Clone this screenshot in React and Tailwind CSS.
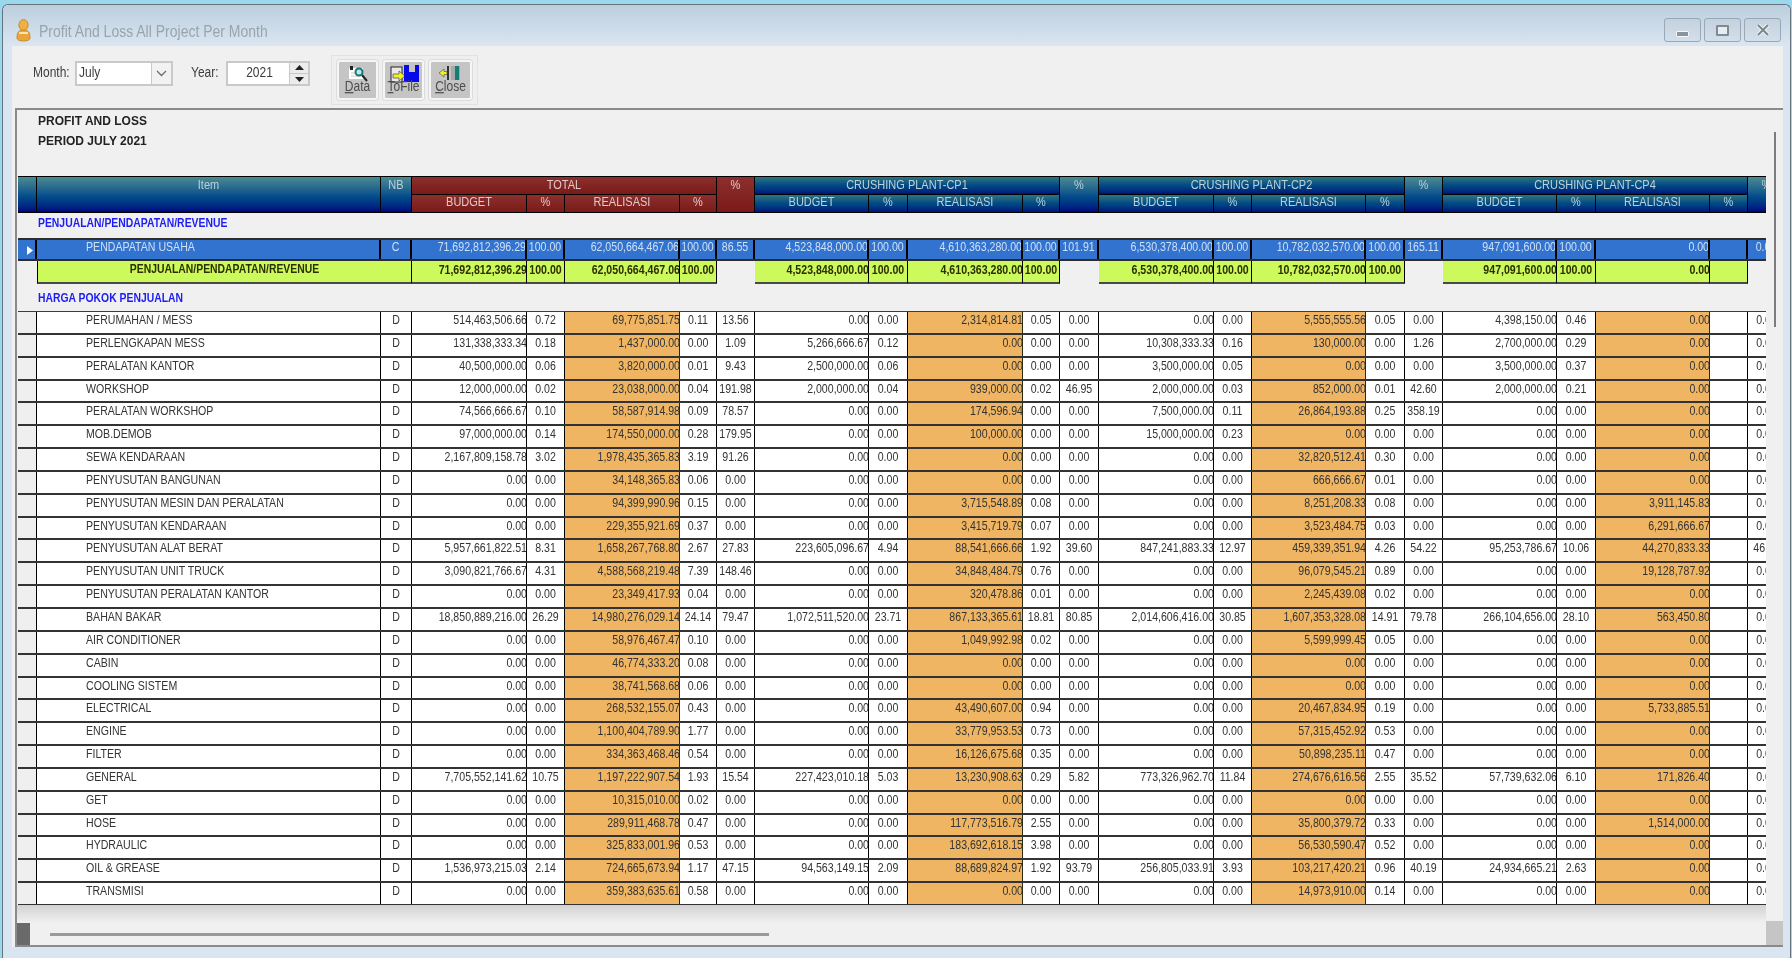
import React from 'react';

const COLS = 'grid grid-cols-[19px_344px_31px_115px_38px_115px_37px_38px_114px_39px_115px_37px_39px_115px_38px_114px_39px_38px_114px_39px_114px_38px_38px]';

const Z = ['0.00', '0.00', '0.00', '0.00', '0.00'];
const r = (real, pct) => ['0.00', '0.00', real, pct, '0.00'];
const c4 = (budget, pct, real, last = '0.00') => [budget, pct, real, '', last];
const C4Z = c4('0.00', '0.00', '0.00');

const ROWS = [
  ['PERUMAHAN / MESS', ['514,463,506.66', '0.72', '69,775,851.75', '0.11', '13.56'], r('2,314,814.81', '0.05'), r('5,555,555.56', '0.05'), c4('4,398,150.00', '0.46', '0.00')],
  ['PERLENGKAPAN MESS', ['131,338,333.34', '0.18', '1,437,000.00', '0.00', '1.09'], ['5,266,666.67', '0.12', '0.00', '0.00', '0.00'], ['10,308,333.33', '0.16', '130,000.00', '0.00', '1.26'], c4('2,700,000.00', '0.29', '0.00')],
  ['PERALATAN KANTOR', ['40,500,000.00', '0.06', '3,820,000.00', '0.01', '9.43'], ['2,500,000.00', '0.06', '0.00', '0.00', '0.00'], ['3,500,000.00', '0.05', '0.00', '0.00', '0.00'], c4('3,500,000.00', '0.37', '0.00')],
  ['WORKSHOP', ['12,000,000.00', '0.02', '23,038,000.00', '0.04', '191.98'], ['2,000,000.00', '0.04', '939,000.00', '0.02', '46.95'], ['2,000,000.00', '0.03', '852,000.00', '0.01', '42.60'], c4('2,000,000.00', '0.21', '0.00')],
  ['PERALATAN WORKSHOP', ['74,566,666.67', '0.10', '58,587,914.98', '0.09', '78.57'], r('174,596.94', '0.00'), ['7,500,000.00', '0.11', '26,864,193.88', '0.25', '358.19'], C4Z],
  ['MOB.DEMOB', ['97,000,000.00', '0.14', '174,550,000.00', '0.28', '179.95'], r('100,000.00', '0.00'), ['15,000,000.00', '0.23', '0.00', '0.00', '0.00'], C4Z],
  ['SEWA KENDARAAN', ['2,167,809,158.78', '3.02', '1,978,435,365.83', '3.19', '91.26'], Z, r('32,820,512.41', '0.30'), C4Z],
  ['PENYUSUTAN BANGUNAN', r('34,148,365.83', '0.06'), Z, r('666,666.67', '0.01'), C4Z],
  ['PENYUSUTAN MESIN DAN PERALATAN', r('94,399,990.96', '0.15'), r('3,715,548.89', '0.08'), r('8,251,208.33', '0.08'), c4('0.00', '0.00', '3,911,145.83')],
  ['PENYUSUTAN KENDARAAN', r('229,355,921.69', '0.37'), r('3,415,719.79', '0.07'), r('3,523,484.75', '0.03'), c4('0.00', '0.00', '6,291,666.67')],
  ['PENYUSUTAN ALAT BERAT', ['5,957,661,822.51', '8.31', '1,658,267,768.80', '2.67', '27.83'], ['223,605,096.67', '4.94', '88,541,666.66', '1.92', '39.60'], ['847,241,883.33', '12.97', '459,339,351.94', '4.26', '54.22'], c4('95,253,786.67', '10.06', '44,270,833.33', '46.48')],
  ['PENYUSUTAN UNIT TRUCK', ['3,090,821,766.67', '4.31', '4,588,568,219.48', '7.39', '148.46'], r('34,848,484.79', '0.76'), r('96,079,545.21', '0.89'), c4('0.00', '0.00', '19,128,787.92')],
  ['PENYUSUTAN PERALATAN KANTOR', r('23,349,417.93', '0.04'), r('320,478.86', '0.01'), r('2,245,439.08', '0.02'), C4Z],
  ['BAHAN BAKAR', ['18,850,889,216.00', '26.29', '14,980,276,029.14', '24.14', '79.47'], ['1,072,511,520.00', '23.71', '867,133,365.61', '18.81', '80.85'], ['2,014,606,416.00', '30.85', '1,607,353,328.08', '14.91', '79.78'], c4('266,104,656.00', '28.10', '563,450.80')],
  ['AIR CONDITIONER', r('58,976,467.47', '0.10'), r('1,049,992.98', '0.02'), r('5,599,999.45', '0.05'), C4Z],
  ['CABIN', r('46,774,333.20', '0.08'), Z, Z, C4Z],
  ['COOLING SISTEM', r('38,741,568.68', '0.06'), Z, Z, C4Z],
  ['ELECTRICAL', r('268,532,155.07', '0.43'), r('43,490,607.00', '0.94'), r('20,467,834.95', '0.19'), c4('0.00', '0.00', '5,733,885.51')],
  ['ENGINE', r('1,100,404,789.90', '1.77'), r('33,779,953.53', '0.73'), r('57,315,452.92', '0.53'), C4Z],
  ['FILTER', r('334,363,468.46', '0.54'), r('16,126,675.68', '0.35'), r('50,898,235.11', '0.47'), C4Z],
  ['GENERAL', ['7,705,552,141.62', '10.75', '1,197,222,907.54', '1.93', '15.54'], ['227,423,010.18', '5.03', '13,230,908.63', '0.29', '5.82'], ['773,326,962.70', '11.84', '274,676,616.56', '2.55', '35.52'], c4('57,739,632.06', '6.10', '171,826.40')],
  ['GET', r('10,315,010.00', '0.02'), Z, Z, C4Z],
  ['HOSE', r('289,911,468.78', '0.47'), r('117,773,516.79', '2.55'), r('35,800,379.72', '0.33'), c4('0.00', '0.00', '1,514,000.00')],
  ['HYDRAULIC', r('325,833,001.96', '0.53'), r('183,692,618.15', '3.98'), r('56,530,590.47', '0.52'), C4Z],
  ['OIL & GREASE', ['1,536,973,215.03', '2.14', '724,665,673.94', '1.17', '47.15'], ['94,563,149.15', '2.09', '88,689,824.97', '1.92', '93.79'], ['256,805,033.91', '3.93', '103,217,420.21', '0.96', '40.19'], c4('24,934,665.21', '2.63', '0.00')],
  ['TRANSMISI', r('359,383,635.61', '0.58'), Z, r('14,973,910.00', '0.14'), C4Z],
];

const BLUE = [
  ['71,692,812,396.29', '100.00', '62,050,664,467.06', '100.00', '86.55'],
  ['4,523,848,000.00', '100.00', '4,610,363,280.00', '100.00', '101.91'],
  ['6,530,378,400.00', '100.00', '10,782,032,570.00', '100.00', '165.11'],
  ['947,091,600.00', '100.00', '0.00', '', '0.00'],
];

const GROUPS = [
  { title: 'CRUSHING PLANT-CP1' },
  { title: 'CRUSHING PLANT-CP2' },
  { title: 'CRUSHING PLANT-CP4' },
];

const NAVY = 'bg-linear-to-b from-[#4b8b92] to-[#00007e]';
const BAND = 'bg-linear-to-b from-[#2f7482] to-[#00107e]';
const RED = 'bg-linear-to-b from-[#8c2f2d] to-[#7b1a18]';

// the old app draws a condensed face, so the text is stretched upward
function T({ children }) {
  return <span className="inline-block scale-y-[1.22]">{children}</span>;
}

// right aligned figures run into the cell border like in the grid of the app
function N({ children }) {
  return <span className="inline-block scale-y-[1.22] translate-x-px">{children}</span>;
}

function PersonIcon() {
  return (
    <svg width="15" height="23" viewBox="0 0 15 23">
      <ellipse cx="7.5" cy="6" rx="4.6" ry="5.4" fill="#f0b040" stroke="#c98a2a" />
      <path d="M1 19c0-6 2-8 6.500-8s6.500 2 6.500 8c0 2-3 3-6.500 3S1 21 1 19z" fill="#eaa53a" stroke="#c98a2a" />
      <path d="M3 14h9" stroke="#fbe2a8" strokeWidth="2" />
    </svg>
  );
}

function CaptionButton({ children }) {
  return (
    <div className="w-[37px] h-[24px] rounded-[3px] border border-[#98a8b6] bg-linear-to-b from-[#c4d2df] to-[#d3dfe9] flex items-center justify-center">
      {children}
    </div>
  );
}

function DataIcon() {
  return (
    <svg width="24" height="22" viewBox="0 0 24 22">
      <rect x="3" y="4" width="14" height="11" fill="#fff" />
      <path d="M4 2h3v4H4z" fill="#222" />
      <path d="M5 9h9M5 12h9" stroke="#c8c8c8" />
      <circle cx="13" cy="8" r="3.500" fill="#bfe8e4" stroke="#157a78" strokeWidth="2" />
      <path d="M16 11l5 6" stroke="#222" strokeWidth="2" />
    </svg>
  );
}

function FileIcon() {
  return (
    <svg width="32" height="22" viewBox="0 0 32 22">
      <rect x="3" y="3" width="11" height="15" fill="#e8e8e8" stroke="#222" />
      <path d="M5 10h6v-3l6 5-6 5v-3H5z" fill="#f2f020" stroke="#333" strokeWidth="0.6" />
      <path d="M16 1h5v7h6V1h4v17H16z" fill="#0808e8" />
    </svg>
  );
}

function CloseIcon() {
  return (
    <svg width="28" height="22" viewBox="0 0 28 22">
      <path d="M10 2h2v14h-2z" fill="#333" />
      <path d="M2 9l5-4v2.500h3v3H7V13z" fill="#f2f020" stroke="#333" strokeWidth="0.5" />
      <rect x="14" y="2" width="9" height="14" fill="#a8a8a8" />
      <rect x="18" y="2" width="4" height="14" fill="#167c78" />
    </svg>
  );
}

function ToolButton({ icon, label, width }) {
  return (
    <div className={`${width} h-[40px] rounded-[3px] border-2 border-[#f6f6f6] shadow-[0_0_0_1px_#dcdcdc] bg-[#c5c5c5] relative flex justify-center pt-0.5`}>
      {icon}
      <span className="absolute left-0 right-0 top-[15px] text-center text-[12px] leading-[18px] text-[#4c4c4c]">
        <T><span className="underline">{label[0]}</span>{label.slice(1)}</T>
      </span>
    </div>
  );
}

function Toolbar() {
  return (
    <div className="h-[62px] flex items-start">
      <div className="flex items-center h-[25px] mt-[15px] ml-[21px] text-[#3d3d3d] text-[12px]">
        <span className="w-[42px] leading-[20px] -mt-1"><T>Month:</T></span>
        <div className="w-[98px] h-[25px] border-2 border-[#c9c9c9] bg-white flex">
          <span className="flex-1 pl-[2px] leading-[19px]"><T>July</T></span>
          <div className="w-[20px] bg-[#f2f2f2] border-l border-[#c9c9c9] flex items-center justify-center">
            <svg width="11" height="7" viewBox="0 0 11 7"><path d="M1 1l4.500 4.500L10 1" fill="none" stroke="#6d6d6d" strokeWidth="1.300" /></svg>
          </div>
        </div>
        <span className="ml-[18px] w-[35px] leading-[20px] -mt-1"><T>Year:</T></span>
        <div className="w-[84px] h-[25px] border-2 border-[#c9c9c9] bg-white flex">
          <span className="w-[61px] text-center pl-[2px] leading-[19px]"><T>2021</T></span>
          <div className="flex-1 bg-[#ececec] border-l border-[#c9c9c9] flex flex-col items-center justify-center gap-[3px]">
            <svg width="9" height="5" viewBox="0 0 9 5"><path d="M4.500 0L9 5H0z" fill="#222" /></svg>
            <div className="w-full h-px bg-[#c9c9c9]" />
            <svg width="9" height="5" viewBox="0 0 9 5"><path d="M4.500 5L9 0H0z" fill="#222" /></svg>
          </div>
        </div>
      </div>
      <div className="ml-[21px] mt-[9px] w-[147px] h-[50px] border border-[#e2e2e2] bg-[#efefef] flex items-center gap-[5px] pl-[5px]">
        <ToolButton icon={<DataIcon />} label="Data" width="w-[41px]" />
        <ToolButton icon={<FileIcon />} label="ToFile" width="w-[41px]" />
        <ToolButton icon={<CloseIcon />} label="Close" width="w-[43px]" />
      </div>
    </div>
  );
}

const HEAD = 'border-r border-b border-black text-center text-[#bcd2da] overflow-hidden whitespace-nowrap';

function GridHeader() {
  return (
    <div className={`${COLS} grid-rows-[18px_18px] h-[37px] border-t border-black text-[11px]`}>
      <div className={`row-span-2 ${HEAD} ${NAVY}`} />
      <div className={`row-span-2 leading-[15px] ${HEAD} ${NAVY}`}><T>Item</T></div>
      <div className={`row-span-2 leading-[15px] ${HEAD} ${NAVY}`}><T>NB</T></div>
      <div className={`col-span-4 leading-[15px] text-[#e0caca]! ${HEAD} ${RED}`}><T>TOTAL</T></div>
      <div className={`row-span-2 leading-[15px] text-[#e0caca]! ${HEAD} ${RED}`}><T>%</T></div>
      {GROUPS.map((group) => (
        <React.Fragment key={group.title}>
          <div className={`col-span-4 leading-[15px] ${HEAD} ${BAND}`}><T>{group.title}</T></div>
          <div className={`row-span-2 leading-[15px] ${HEAD} ${NAVY}`}><T>%</T></div>
        </React.Fragment>
      ))}
      {['BUDGET', '%', 'REALISASI', '%'].map((text, i) => (
        <div key={i} className={`leading-[13px] text-[#e0caca]! ${HEAD} ${RED}`}><T>{text}</T></div>
      ))}
      {GROUPS.map((group) => ['BUDGET', '%', 'REALISASI', '%'].map((text, i) => (
        <div key={group.title + i} className={`leading-[13px] ${HEAD} ${BAND}`}><T>{text}</T></div>
      )))}
    </div>
  );
}

const CELL = 'overflow-hidden whitespace-nowrap border-r';

function BlueRow() {
  return (
    <div className={`${COLS} h-[23px] border-y-2 border-[#2c2c2c] bg-[#3273cf] text-[#cfe0f5] leading-[13px] text-[10.6px]`}>
      <div className="border-r-2 border-black relative">
        <svg className="absolute left-[9px] top-[6px]" width="6" height="9" viewBox="0 0 6 9"><path d="M0 0l6 4.500L0 9z" fill="#fff" /></svg>
      </div>
      <div className="border-r-2 border-black pl-[49px]"><T>PENDAPATAN USAHA</T></div>
      <div className="border-r-2 border-black text-center"><T>C</T></div>
      {BLUE.flat().map((value, i) => {
        const right = i % 5 === 0 || i % 5 === 2;
        return (
          <div key={i} className={`${CELL} border-r-2 border-black ${right ? 'text-right' : 'text-center'}`}>
            {right ? <N>{value}</N> : <T>{value}</T>}
          </div>
        );
      })}
    </div>
  );
}

function GreenRow() {
  const cell = 'h-[23px] bg-[#ccf95c] border-b-2 border-b-[#4a4a4a] border-r border-r-black';
  return (
    <div className={`${COLS} h-[23px] font-bold text-[#2b3000] leading-[16px] text-[10.6px]`}>
      <div />
      <div className={`col-span-2 text-center text-[10.4px] border-l border-l-black ${cell}`}><T>PENJUALAN/PENDAPATAN/REVENUE</T></div>
      {BLUE.map((group, g) => (
        <React.Fragment key={g}>
          <div className={`${cell} ${CELL} text-right`}><N>{group[0]}</N></div>
          <div className={`${cell} ${CELL} text-center`}><T>{group[1]}</T></div>
          <div className={`${cell} ${CELL} text-right`}><N>{group[2]}</N></div>
          <div className={`${cell} ${CELL} text-center`}><T>{group[3]}</T></div>
          <div />
        </React.Fragment>
      ))}
    </div>
  );
}

function DataRow({ name, groups }) {
  return (
    <div className={`${COLS} h-[22.85px] border-b-2 border-[#333] bg-white text-[#333] leading-[15px] text-[10.6px]`}>
      <div className="bg-[#efefef] border-r border-black" />
      <div className="border-r border-black pl-[49px] whitespace-nowrap"><T>{name}</T></div>
      <div className="border-r border-black text-center"><T>D</T></div>
      {groups.map((group, g) => (
        <React.Fragment key={g}>
          <div className={`${CELL} border-black text-right`}><N>{group[0]}</N></div>
          <div className={`${CELL} border-black text-center`}><T>{group[1]}</T></div>
          <div className={`${CELL} border-[#2a2a10] text-right bg-[#efb562]`}><N>{group[2]}</N></div>
          <div className={`${CELL} border-black text-center`}><T>{group[3]}</T></div>
          <div className={`${CELL} border-black text-center`}><T>{group[4]}</T></div>
        </React.Fragment>
      ))}
    </div>
  );
}

function SectionTitle({ children, height, leading }) {
  return (
    <div className={`${height} ${leading} pl-[20px] font-bold text-[#1d1df2] text-[10.4px]`}>
      <T>{children}</T>
    </div>
  );
}

export default function App() {
  return (
    <div
      className="w-[1792px] h-[958px] overflow-hidden bg-[#9ad8ee] pt-1 pl-0.5 pr-px blur-[0.5px] text-[12px]"
      style={{ fontFamily: '"Liberation Sans", Arial, sans-serif' }}
    >
      <div className="h-[954px] rounded-t-[6px] border-t border-l border-r border-[#66727c] bg-[#d9e5f1] flex flex-col">
        <div className="h-[41px] shrink-0 rounded-t-[6px] bg-linear-to-b from-[#bccede] to-[#dae6f1] flex items-start pl-[13px] pr-[9px]">
          <div className="mt-[14px]"><PersonIcon /></div>
          <span className="mt-[15px] ml-[8px] text-[#98a4ae] text-[14px] leading-[22px]"><T>Profit And Loss All Project Per Month</T></span>
          <div className="ml-auto mt-[13px] flex gap-[3px]">
            <CaptionButton><div className="w-[13px] h-[6px] mt-[7px] bg-[#8a949c] border border-[#f4f7fa] rounded-[1px]" /></CaptionButton>
            <CaptionButton><div className="w-[13px] h-[11px] bg-[#e8edf2] border-2 border-[#808a92] rounded-[1px]" /></CaptionButton>
            <CaptionButton>
              <svg width="14" height="12" viewBox="0 0 14 12"><path d="M2 1l10 10M12 1L2 11" stroke="#f4f7fa" strokeWidth="4" /><path d="M2 1l10 10M12 1L2 11" stroke="#7e8890" strokeWidth="2.200" /></svg>
            </CaptionButton>
          </div>
        </div>

        <div className="ml-[9px] mr-[7px] h-[901px] bg-[#f0f0f0] flex flex-col">
          <Toolbar />
          <div className="ml-[3px] h-[839px] border-t-2 border-l-2 border-b-2 border-[#8a8a8a] flex flex-col overflow-hidden">
            <div className="flex h-[795px]">
              <div className="w-[1749px] pl-px overflow-hidden">
                <div className="h-[65px] pl-[20px] font-bold text-[#222] text-[12px] leading-[20px]">
                  <div className="mt-[1px]"><span className="inline-block scale-y-[1.12]">PROFIT AND LOSS</span></div>
                  <div><span className="inline-block scale-y-[1.12]">PERIOD JULY 2021</span></div>
                </div>
                <div className="w-[2000px]">
                  <GridHeader />
                  <SectionTitle height="h-[25px]" leading="leading-[20px]">PENJUALAN/PENDAPATAN/REVENUE</SectionTitle>
                  <BlueRow />
                  <GreenRow />
                  <SectionTitle height="h-[27px]" leading="leading-[27px]">HARGA POKOK PENJUALAN</SectionTitle>
                  <div className="border-t border-[#3c3c3c]">
                    {ROWS.map((row, i) => (
                      <DataRow key={i} name={row[0]} groups={row.slice(1)} />
                    ))}
                  </div>
                </div>
              </div>
              <div className="flex-1 flex justify-center pt-[22px]">
                <div className="w-[2px] h-[195px] bg-[#7c7c7c]" />
              </div>
            </div>
            <div className="flex flex-1">
              <div className="w-[1749px] flex flex-col">
                <div className="h-[18px] bg-linear-to-b from-[#d2d2d2] to-[#f0f0f0]" />
                <div className="flex-1 flex items-center">
                  <div className="w-[13px] h-full bg-[#6a6a6a]" />
                  <div className="ml-[20px] w-[719px] h-[3px] bg-[#9a9a9a]" />
                </div>
              </div>
              <div className="flex-1 flex flex-col justify-end">
                <div className="h-[24px] bg-[#c5c5c5]" />
              </div>
            </div>
          </div>
        </div>
      </div>
    </div>
  );
}
